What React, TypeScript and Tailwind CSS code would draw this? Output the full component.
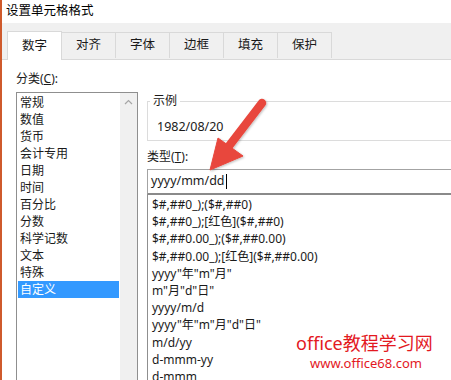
import React from "react";

const font = "font-['Noto_Sans','Noto_Sans_CJK_SC',sans-serif]";

const categories = ["常规", "数值", "货币", "会计专用", "日期", "时间", "百分比", "分数", "科学记数", "文本", "特殊", "自定义"];
const formats = [
  "$#,##0_);($#,##0)",
  "$#,##0_);[红色]($#,##0)",
  "$#,##0.00_);($#,##0.00)",
  "$#,##0.00_);[红色]($#,##0.00)",
  'yyyy"年"m"月"',
  'm"月"d"日"',
  "yyyy/m/d",
  'yyyy"年"m"月"d"日"',
  "m/d/yy",
  "d-mmm-yy",
  "d-mmm",
];
const tabs = ["对齐", "字体", "边框", "填充", "保护"];

export default function App() {
  return (
    <div className={`relative w-[451px] h-[380px] overflow-hidden bg-white border-l-2 border-[#cf5a2c] text-[12px] text-[#1a1a1a] ${font}`}>
      {/* title */}
      <div className="h-[23px] pl-[4px] flex items-center text-[12.5px] text-black">设置单元格格式</div>
      {/* tab strip */}
      <div className="h-[37px] bg-[#f0f0f0] flex items-end pl-[5px] border-b border-[#d9d9d9]">
        <div className="w-[55px] h-[29px] -mb-px bg-white border border-b-0 border-[#d9d9d9] flex items-center justify-center text-[12.5px]">数字</div>
        {tabs.map((t) => (
          <div key={t} className="w-[54px] h-[26px] border border-l-0 border-b-0 border-[#d9d9d9] flex items-center justify-center text-[12.5px] mb-px -mb-0">
            {t}
          </div>
        ))}
      </div>
      {/* panel */}
      <div className="flex pl-[14px] pt-[11px]">
        {/* left column */}
        <div className="w-[122px] shrink-0">
          <div className="leading-[16px]">
            分类(<span className="underline">C</span>):
          </div>
          <div className="mt-[5px] h-[400px] border border-[#8f8f8f] flex">
            <div className="flex-1 pt-[1px] px-[1px]">
              {categories.map((c) => (
                <div
                  key={c}
                  className={`h-[17px] leading-[17px] pl-[2px] ${c === "自定义" ? "bg-[#3399ff] text-white" : ""}`}
                >
                  {c}
                </div>
              ))}
            </div>
            <div className="w-[17px] bg-[#f0f0f0] flex justify-center pt-[6px]">
              <svg width="9" height="6" viewBox="0 0 9 6">
                <path d="M1 5 L4.5 1.5 L8 5" fill="none" stroke="#a6a6a6" strokeWidth="1.2" />
              </svg>
            </div>
          </div>
        </div>
        {/* right column */}
        <div className="ml-[9px] flex-1 min-w-0 mr-[-40px]">
          <fieldset className="mt-[22px] border border-[#dcdcdc] px-0">
            <legend className="ml-[2px] px-[3px] leading-[16px]">示例</legend>
            <div className="h-[31px] pt-[9px] pl-[9px] leading-[17px] text-[12.5px]">1982/08/20</div>
          </fieldset>
          <div className="mt-[8px] leading-[16px]">
            类型(<span className="underline">T</span>):
          </div>
          <div className="mt-[4px] h-[26px] border border-[#a3a3a3] border-b-2 border-b-[#8a8a8a] flex items-center pl-[3px] text-[12.5px]">
            <span>yyyy/mm/dd</span>
            <span className="inline-block w-px h-[15px] bg-black ml-px" />
          </div>
          <div className="h-[300px] border-l border-[#8f8f8f] pt-[1px] pl-[4px]">
            {formats.map((f) => (
              <div key={f} className="h-[17.2px] leading-[17px] whitespace-nowrap">
                {f}
              </div>
            ))}
          </div>
        </div>
      </div>

      {/* watermark */}
      <div className="absolute left-[294px] top-[331px] text-[#e3191f] text-[18px] leading-[24px] whitespace-nowrap">office教程学习网</div>
      <div className="absolute left-[308px] top-[354px] text-[#e3191f] text-[13px] leading-[18px] whitespace-nowrap">www.office68.com</div>

      {/* arrow */}
      <svg className="absolute left-0 top-0 pointer-events-none" width="451" height="380" viewBox="0 0 451 380">
        <defs>
          <filter id="sh" x="-20%" y="-20%" width="140%" height="140%">
            <feDropShadow dx="1" dy="1" stdDeviation="1.2" floodColor="#000" floodOpacity="0.25" />
          </filter>
        </defs>
        <g filter="url(#sh)" fill="#e8473d" stroke="#e8473d">
          <line x1="260" y1="103" x2="227" y2="146" strokeWidth="8.5" strokeLinecap="round" />
          <polygon points="208,170 216,138 241,156" strokeWidth="1" strokeLinejoin="round" />
        </g>
      </svg>
    </div>
  );
}
